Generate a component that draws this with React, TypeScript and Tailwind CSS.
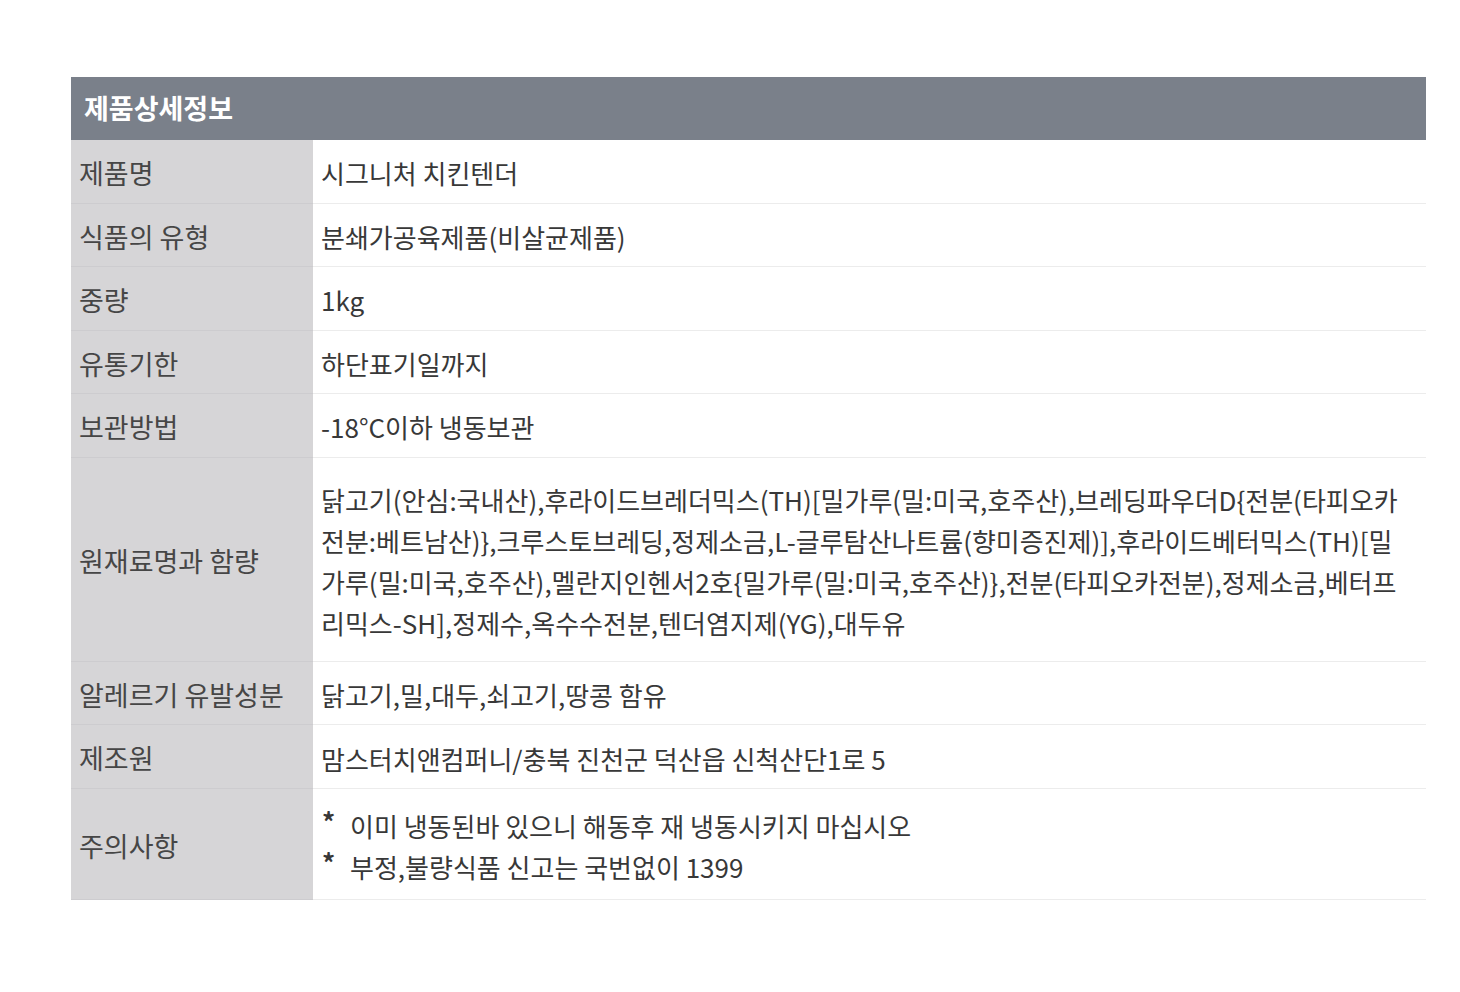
const rows: { label: string; value: string }[] = [
  { label: '제품명', value: '시그니처 치킨텐더' },
  { label: '식품의 유형', value: '분쇄가공육제품(비살균제품)' },
  { label: '중량', value: '1kg' },
  { label: '유통기한', value: '하단표기일까지' },
  { label: '보관방법', value: '-18°C이하 냉동보관' },
]

const ingredients = [
  '닭고기(안심:국내산),후라이드브레더믹스(TH)[밀가루(밀:미국,호주산),브레딩파우더D{전분(타피오카',
  '전분:베트남산)},크루스토브레딩,정제소금,L-글루탐산나트륨(향미증진제)],후라이드베터믹스(TH)[밀',
  '가루(밀:미국,호주산),멜란지인헨서2호{밀가루(밀:미국,호주산)},전분(타피오카전분),정제소금,베터프',
  '리믹스-SH],정제수,옥수수전분,텐더염지제(YG),대두유',
]

const notes = ['이미 냉동된바 있으니 해동후 재 냉동시키지 마십시오', '부정,불량식품 신고는 국번없이 1399']

function Row({ label, children, cellClass }: { label: string; children: React.ReactNode; cellClass: string }) {
  return (
    <div className="grid grid-cols-[242px_1fr]">
      <div className="flex items-center bg-[#d6d5d7] px-[8px] pt-[4px] text-[27px] text-[#464646] border-b border-[#cdcccf]">{label}</div>
      <div className={`pl-[8px] pr-2 text-[#383838] border-b-[1.5px] border-[#ececec] ${cellClass}`}>{children}</div>
    </div>
  )
}

export default function App() {
  return (
    <div
      className="min-h-[992px] bg-white pt-[77px] text-[26px]"
      style={{ fontFamily: '"Noto Sans CJK KR", "Noto Sans", sans-serif' }}
    >
      <div className="ml-[71px] w-[1355px]">
        <div className="flex h-[63px] items-center bg-[#7a808a] pl-[13px] text-[27px] font-bold text-white">
          제품상세정보
        </div>

        {rows.map(r => (
          <Row key={r.label} label={r.label} cellClass="pt-[13px] pb-[9px] leading-[40.6px]">
            {r.value}
          </Row>
        ))}

        <Row label="원재료명과 함량" cellClass="pt-[21px] pb-[18px] leading-[41px]">
          {ingredients.map(line => (
            <div key={line} className="whitespace-nowrap">{line}</div>
          ))}
        </Row>

        <Row label="알레르기 유발성분" cellClass="pt-[13px] pb-[9px] leading-[40px]">
          닭고기,밀,대두,쇠고기,땅콩 함유
        </Row>

        <Row label="제조원" cellClass="pt-[13px] pb-[9px] leading-[41px]">
          맘스터치앤컴퍼니/충북 진천군 덕산읍 신척산단1로 5
        </Row>

        <Row label="주의사항" cellClass="pt-[16px] pb-[12px] leading-[41px]">
          {notes.map(n => (
            <div key={n} className="flex">
              <span className="relative -top-[5px] w-[29px] shrink-0 pl-[1px] font-bold">*</span>
              <span>{n}</span>
            </div>
          ))}
        </Row>
      </div>
    </div>
  )
}
